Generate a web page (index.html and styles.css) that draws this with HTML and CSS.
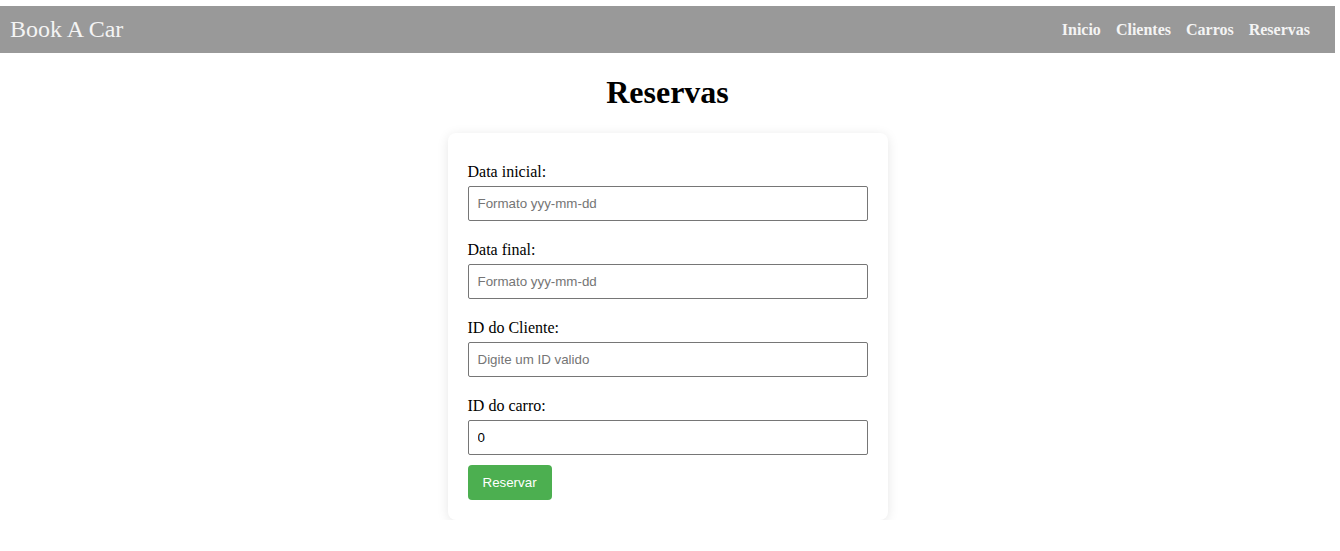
FILE: index.html
```html
<!DOCTYPE html>
<html lang="pt">
<head>
<meta charset="utf-8">
<title>Book A Car - Reservas</title>
<link rel="stylesheet" href="styles.css">
</head>
<body>
<header class="topbar">
  <a class="brand" href="#">Book A Car</a>
  <nav class="nav">
    <a href="#">Inicio</a>
    <a href="#">Clientes</a>
    <a href="#">Carros</a>
    <a href="#">Reservas</a>
  </nav>
</header>
<main class="page">
  <h1 class="title">Reservas</h1>
  <form class="card">
    <div class="group">
      <label for="ini">Data inicial:</label>
      <input id="ini" type="text" placeholder="Formato yyy-mm-dd">
    </div>
    <div class="group">
      <label for="fim">Data final:</label>
      <input id="fim" type="text" placeholder="Formato yyy-mm-dd">
    </div>
    <div class="group">
      <label for="cli">ID do Cliente:</label>
      <input id="cli" type="text" placeholder="Digite um ID valido">
    </div>
    <div class="group last">
      <label for="car">ID do carro:</label>
      <input id="car" type="text" value="0">
    </div>
    <button type="button" class="btn">Reservar</button>
  </form>
</main>
</body>
</html>
```

FILE: styles.css
```css
html, body {
  margin: 0;
  padding: 0;
  background: #ffffff;
}
body {
  font-family: "Liberation Serif", "Times New Roman", serif;
  font-size: 16px;
  color: #000;
}
.topbar {
  margin: 6px 5px 0 0;
  height: 47px;
  background: #999999;
  display: flex;
  align-items: center;
  justify-content: space-between;
  padding: 0 25px 0 10px;
}
.brand {
  color: #f4f4f4;
  text-decoration: none;
  font-size: 24px;
}
.nav {
  display: flex;
  gap: 15px;
}
.nav a {
  color: #f4f4f4;
  text-decoration: none;
  font-weight: bold;
  font-size: 16px;
}
.page {
  width: 1335px;
  display: flex;
  flex-direction: column;
  align-items: center;
}
.title {
  font-size: 32px;
  font-weight: bold;
  margin: 21.44px 0;
}
.card {
  width: 400px;
  padding: 30px 20px 20px;
  background: #fff;
  border-radius: 8px;
  box-shadow: 0 2px 12px rgba(0, 0, 0, 0.1);
  display: flex;
  flex-direction: column;
  align-items: flex-start;
}
.group {
  width: 100%;
  display: flex;
  flex-direction: column;
  margin-bottom: 20px;
}
.group.last {
  margin-bottom: 10px;
}
.group label {
  line-height: 18px;
  margin-bottom: 5px;
}
.group input {
  box-sizing: border-box;
  width: 400px;
  height: 35px;
  margin: 0;
  padding: 0 9px;
  border: 1px solid #767676;
  border-radius: 2px;
  font-family: "Liberation Sans", Arial, sans-serif;
  font-size: 13.333px;
  color: #000;
}
.group input::placeholder {
  color: #757575;
}
.btn {
  height: 35px;
  padding: 0 15px;
  border: none;
  border-radius: 4px;
  background: #4caf50;
  color: #fff;
  font-family: "Liberation Sans", Arial, sans-serif;
  font-size: 13.333px;
  cursor: pointer;
}
```
